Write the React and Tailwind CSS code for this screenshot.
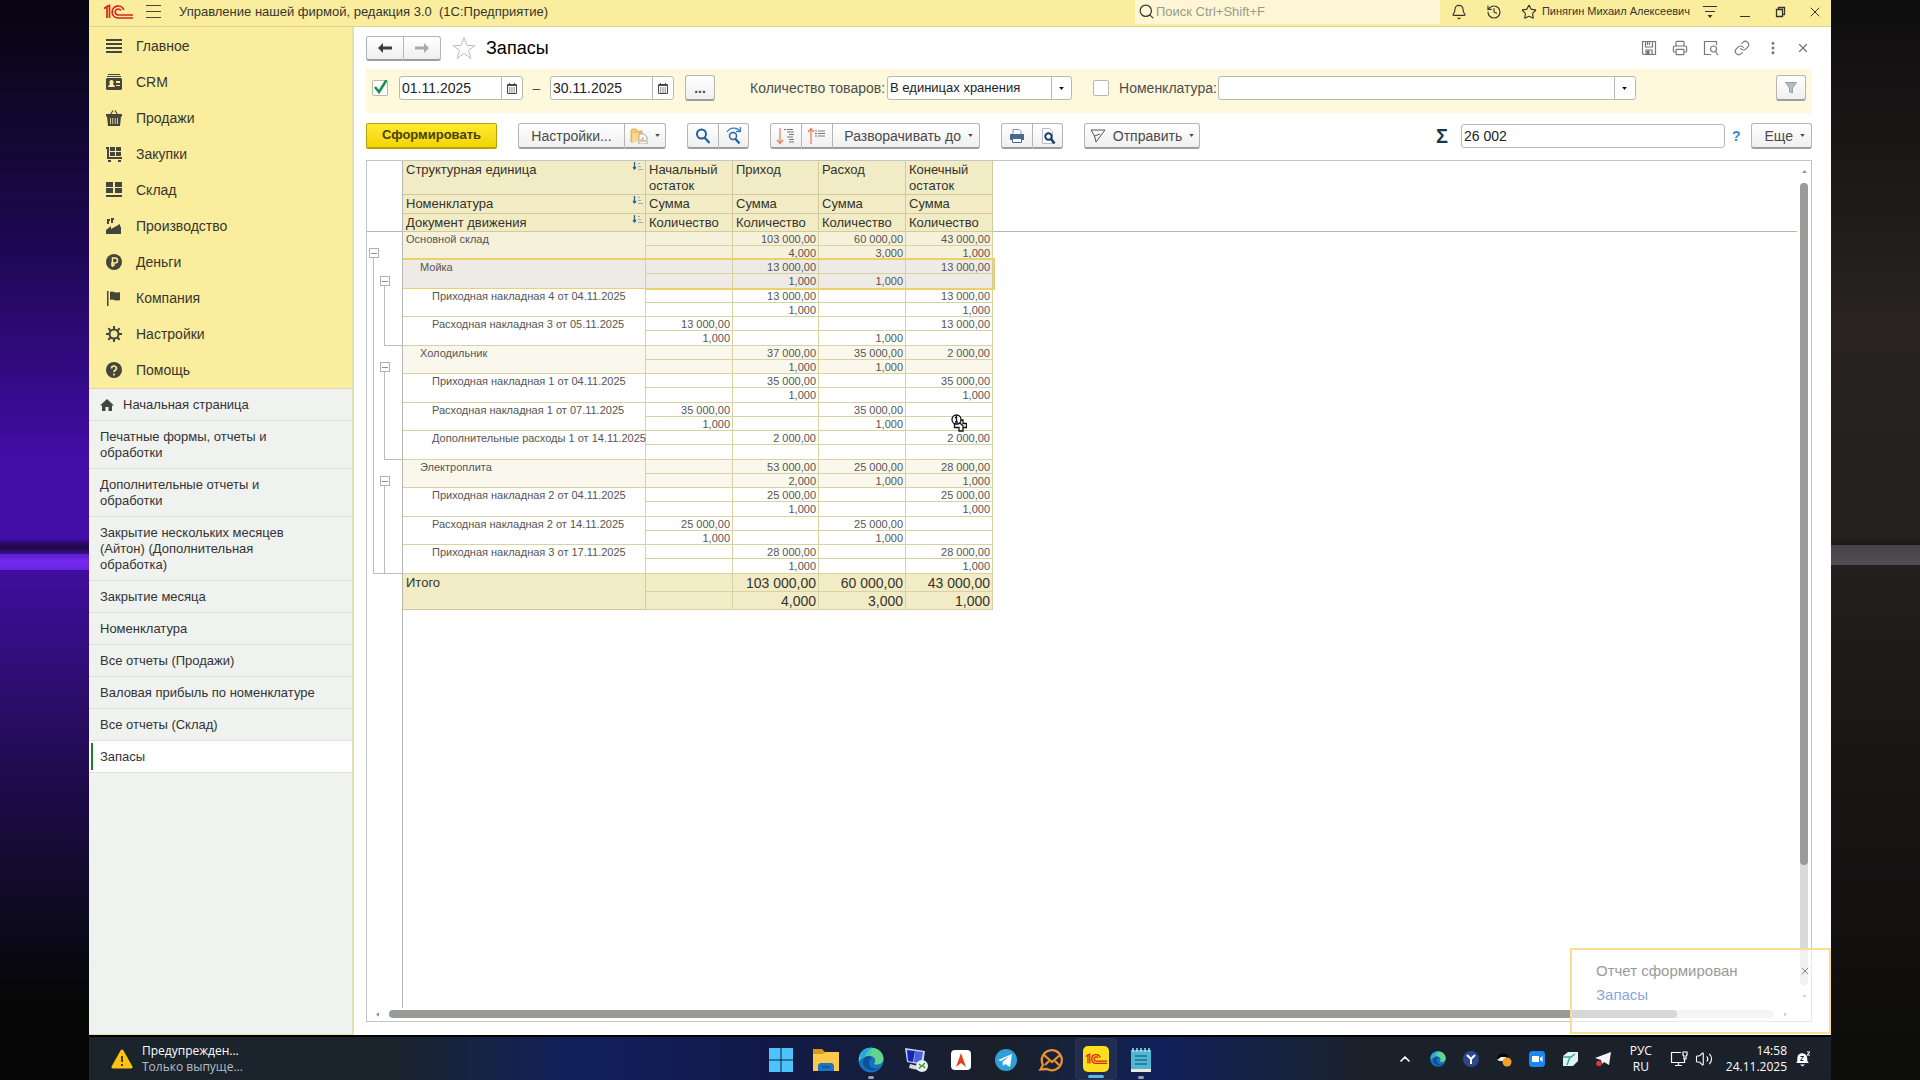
import React, { useState } from 'react';
import {
  Bell,
  History,
  Star,
  Search,
  Printer,
  Link,
  MoreVertical,
  X,
  ChevronUp,
  Volume2,
} from 'lucide-react';

const menuItems = [
  { name: 'Главное', icon: 'main' },
  { name: 'CRM', icon: 'crm' },
  { name: 'Продажи', icon: 'sales' },
  { name: 'Закупки', icon: 'purchases' },
  { name: 'Склад', icon: 'stock' },
  { name: 'Производство', icon: 'production' },
  { name: 'Деньги', icon: 'money' },
  { name: 'Компания', icon: 'company' },
  { name: 'Настройки', icon: 'settings' },
  { name: 'Помощь', icon: 'help' },
];

const openPages = [
  'Печатные формы, отчеты и обработки',
  'Дополнительные отчеты и обработки',
  'Закрытие нескольких месяцев (Айтон) (Дополнительная обработка)',
  'Закрытие месяца',
  'Номенклатура',
  'Все отчеты (Продажи)',
  'Валовая прибыль по номенклатуре',
  'Все отчеты (Склад)',
  'Запасы',
];

// sum / qty: opening balance, income, expense, closing balance
// span: how many table rows the group bracket covers
const rows = [
  { level: 0, name: 'Основной склад', sum: ['', '103 000,00', '60 000,00', '43 000,00'], qty: ['', '4,000', '3,000', '1,000'], span: 23 },
  { level: 1, name: 'Мойка', selected: true, sum: ['', '13 000,00', '', '13 000,00'], qty: ['', '1,000', '1,000', ''], span: 5 },
  { level: 2, name: 'Приходная накладная 4 от 04.11.2025', sum: ['', '13 000,00', '', '13 000,00'], qty: ['', '1,000', '', '1,000'] },
  { level: 2, name: 'Расходная накладная 3 от 05.11.2025', sum: ['13 000,00', '', '', '13 000,00'], qty: ['1,000', '', '1,000', ''] },
  { level: 1, name: 'Холодильник', sum: ['', '37 000,00', '35 000,00', '2 000,00'], qty: ['', '1,000', '1,000', ''], span: 7 },
  { level: 2, name: 'Приходная накладная 1 от 04.11.2025', sum: ['', '35 000,00', '', '35 000,00'], qty: ['', '1,000', '', '1,000'] },
  { level: 2, name: 'Расходная накладная 1 от 07.11.2025', sum: ['35 000,00', '', '35 000,00', ''], qty: ['1,000', '', '1,000', ''] },
  { level: 2, name: 'Дополнительные расходы 1 от 14.11.2025', sum: ['', '2 000,00', '', '2 000,00'], qty: ['', '', '', ''] },
  { level: 1, name: 'Электроплита', sum: ['', '53 000,00', '25 000,00', '28 000,00'], qty: ['', '2,000', '1,000', '1,000'], span: 7 },
  { level: 2, name: 'Приходная накладная 2 от 04.11.2025', sum: ['', '25 000,00', '', '25 000,00'], qty: ['', '1,000', '', '1,000'] },
  { level: 2, name: 'Расходная накладная 2 от 14.11.2025', sum: ['25 000,00', '', '25 000,00', ''], qty: ['1,000', '', '1,000', ''] },
  { level: 2, name: 'Приходная накладная 3 от 17.11.2025', sum: ['', '28 000,00', '', '28 000,00'], qty: ['', '1,000', '', '1,000'] },
];

const indents = ['pl-[3px]', 'pl-[17px]', 'pl-[29px]'];
const levelColors = ['bg-[#f6f1da]', 'bg-[#faf8ec]', 'bg-white'];

const MenuIcon = ({ type }) => {
  const icons = {
    main: <path d="M0 1h16v2H0zM0 5h16v2H0zM0 9h16v2H0zM0 13h16v2H0z" />,
    crm: (
      <>
        <path d="M2 0h12v1H2zM1 2h14v1H1z" />
        <path fillRule="evenodd" d="M1 4h14l1 1v10l-1 1H1l-1-1V5zM2 13h7c0-2-2-2-2-3 1-1 1-4-1.500-4S3 9 4 10c0 1-2 1-2 3zM10 7v2h4V7zM10 11v1h4v-1z" />
      </>
    ),
    sales: (
      <>
        <path d="M3.500 6L7 .500M12.500 6L9 .500" stroke="currentColor" strokeWidth="1.200" />
        <path fillRule="evenodd" d="M0 4h16v2.500h-1L14 16H2L1 6.500H0zM4 8v6h.8V8zM6.400 8v6h.8V8zM8.800 8v6h.8V8zM11.200 8v6h.8V8z" />
      </>
    ),
    purchases: (
      <path d="M0 1h3v10h13v2H1V3H0zM4 1h5v4H4zM10 1h5v4h-5zM4 6h5v4H4zM10 6h5v4h-5zM2 14h3v2H2zM12 14h3v2h-3z" />
    ),
    stock: <path d="M0 0h7v5H0zM9 0h7v5H9zM0 6h7v5H0zM9 6h7v5H9zM0 13h16v2H0z" />,
    production: <path d="M0 16v-4l5-4v3l9-5v3l1-1v8zM1 1h3v2H3v3H1zM5 0h3v2H7v3H5z" />,
    money: (
      <>
        <circle cx="8" cy="8" r="8" />
        <path d="M6.500 13V4h2.500a2.500 2.500 0 010 5H5M5 11h4" fill="none" stroke="#fbed9e" strokeWidth="1.500" />
      </>
    ),
    company: <path d="M1 1h1.500v15H1zM4 2c3-2 5 2 10 0v8c-5 2-7-2-10 0z" />,
    settings: (
      <g fill="none" stroke="currentColor">
        <circle cx="8" cy="8" r="4.500" strokeWidth="2" />
        <path d="M8 0v3M8 13v3M0 8h3M13 8h3M2.300 2.300l2 2M11.700 11.700l2 2M2.300 13.700l2-2M11.700 4.300l2-2" strokeWidth="2" />
      </g>
    ),
    help: (
      <>
        <circle cx="8" cy="8" r="8" />
        <path d="M5.500 6.500a2.500 2.500 0 115 0c0 1.500-2.500 1.500-2.500 3.500M8 11.500v2" fill="none" stroke="#fbed9e" strokeWidth="1.700" />
      </>
    ),
  };
  return (
    <svg viewBox="0 0 16 16" className="size-4 shrink-0 text-[#45453b]" fill="currentColor" aria-hidden="true">
      {icons[type]}
    </svg>
  );
};

const Logo = ({ className }) => (
  <svg viewBox="0 0 30 16" className={className} fill="none" stroke="currentColor" strokeWidth="1.700" aria-hidden="true">
    <path d="M1 4.500L4 2.500V14M6.500 14V1.500L4 2.500" />
    <path d="M20.800 6A6 6 0 1015 14h15" />
    <path d="M17.800 6.500A3 3 0 1015 11h15" />
  </svg>
);

const Caret = () => (
  <svg viewBox="0 0 6 4" className="h-[3px] w-[5px] shrink-0" fill="currentColor" aria-hidden="true">
    <path d="M0 0h6L3 4z" />
  </svg>
);

const TitleBar = () => (
  <header className="flex h-[27px] shrink-0 items-center border-b border-[#dfd48d] bg-[#fbed9e] pb-[3px] text-[#35352d]">
    <Logo className="ml-[14px] h-4 w-[30px] text-[#d9231c]" />
    <button type="button" aria-label="Меню" className="ml-[13px] flex w-[15px] flex-col gap-[5px]">
      <span className="h-px bg-[#45453b]" />
      <span className="h-px bg-[#45453b]" />
      <span className="h-px bg-[#45453b]" />
    </button>
    <h1 className="ml-[18px] whitespace-pre text-[13px]">Управление нашей фирмой, редакция 3.0  (1С:Предприятие)</h1>
    <label className="ml-auto flex h-6 w-[305px] items-center bg-[#fef6d5] pl-[3px]">
      <Search className="size-[17px] shrink-0" strokeWidth={1.7} />
      <input
        type="text"
        aria-label="Поиск"
        placeholder="Поиск Ctrl+Shift+F"
        className="ml-px w-full bg-transparent text-[13px] outline-none placeholder:text-[#9c9a88]"
      />
    </label>
    <div className="ml-[11px] flex items-center gap-[19px]">
      <button type="button" aria-label="Уведомления"><Bell className="size-4" strokeWidth={1.7} /></button>
      <button type="button" aria-label="История"><History className="size-4" strokeWidth={1.7} /></button>
      <button type="button" aria-label="Избранное"><Star className="size-4" strokeWidth={1.7} /></button>
    </div>
    <span className="ml-[5px] whitespace-nowrap text-[11px]">Пинягин Михаил Алексеевич</span>
    <div className="ml-[12px] mr-[8px] flex items-center gap-[19px]">
      <button type="button" aria-label="Сервис">
        <svg viewBox="0 0 16 14" className="h-3.5 w-4" fill="currentColor"><path d="M1 1h14v1H1zM3 6h10v1H3zM5.500 10h5L8 13z" /></svg>
      </button>
      <button type="button" aria-label="Свернуть">
        <svg viewBox="0 0 16 16" className="size-4"><path d="M3 12.500h10" stroke="currentColor" /></svg>
      </button>
      <button type="button" aria-label="Восстановить">
        <svg viewBox="0 0 16 16" className="size-4" fill="none" stroke="currentColor" strokeWidth="1.300"><path d="M4.500 5.500h6v7h-6zM6.500 5V3.500h6v7H11" /></svg>
      </button>
      <button type="button" aria-label="Закрыть"><X className="size-4" strokeWidth={1.5} /></button>
    </div>
  </header>
);

const Sidebar = () => (
  <nav className="flex w-[265px] shrink-0 flex-col border-r-2 border-b border-[#e6dfb0] bg-[#f0f2f0]">
    <ul className="border-b border-[#dcd6ac] bg-[#fbed9e] pt-px">
      {menuItems.map((item) => (
        <li key={item.name}>
          <a href="#" className="flex h-[36px] items-center gap-[14px] pl-[17px] text-sm text-[#35352d]">
            <MenuIcon type={item.icon} />
            {item.name}
          </a>
        </li>
      ))}
    </ul>
    <ul className="text-[13px]/[16px] text-[#333333]">
      <li className="border-b border-[#dde0dd]">
        <a href="#" className="flex items-center gap-[9px] py-[7px] pt-[8px] pl-[11px]">
          <svg viewBox="0 0 14 12" className="h-3 w-3.5" fill="#444" aria-hidden="true">
            <path d="M7 0l7 6.500h-2V12H8.500V8h-3v4H2V6.500H0z" />
          </svg>
          Начальная страница
        </a>
      </li>
      {openPages.map((page) => (
        <li key={page} className="border-b border-[#dde0dd]">
          {page === 'Запасы' ? (
            <a href="#" aria-current="page" className="flex bg-white py-[2px] pl-[2px]">
              <span className="w-[2px] bg-[#1b7f2c]" />
              <span className="py-[5px] pt-[6px] pl-[7px]">{page}</span>
            </a>
          ) : (
            <a href="#" className="block py-[7px] pt-[8px] pr-[33px] pl-[11px]">{page}</a>
          )}
        </li>
      ))}
    </ul>
  </nav>
);

const buttonLook = 'border border-[#b5b5b5] border-b-2 border-b-[#9d9d9d] bg-linear-to-b from-white to-[#efefef] text-[#4a4a4a]';

const FormHeader = () => {
  const [favorite, setFavorite] = useState(false);

  return (
    <div className="flex h-[42px] items-center pr-[2px] text-[#777777]">
      <div className="flex">
        <button type="button" aria-label="Назад" className={`flex h-[25px] w-[38px] items-center justify-center rounded-l-[3px] ${buttonLook}`}>
          <svg viewBox="0 0 14 10" className="h-2.5 w-3.5" fill="#3d3d3d"><path d="M0 5l5-5v3.500h9v3H5V10z" /></svg>
        </button>
        <button type="button" aria-label="Вперед" className={`flex h-[25px] w-[37px] items-center justify-center rounded-r-[3px] border-l-0 ${buttonLook}`}>
          <svg viewBox="0 0 14 10" className="h-2.5 w-3.5" fill="#a9a9a9"><path d="M14 5L9 0v3.500H0v3h9V10z" /></svg>
        </button>
      </div>
      <button type="button" aria-label="В избранное" className="ml-[11px]" onClick={() => setFavorite(!favorite)}>
        <svg viewBox="0 0 24 24" className="size-6" fill={favorite ? '#f6d743' : 'none'} stroke="#bcbcbc">
          <path d="M12 1.500l3 8h8l-6.500 5 2.500 8-7-5-7 5 2.500-8L1 9.500h8z" />
        </svg>
      </button>
      <h2 className="ml-[10px] text-lg text-black">Запасы</h2>
      <div className="ml-auto flex items-center gap-[15px]">
        <button type="button" aria-label="Сохранить">
          <svg viewBox="0 0 16 16" className="size-4" fill="none" stroke="currentColor" strokeWidth="1.200">
            <path d="M1.500 1.500h13v13h-12l-1-1zM4.500 2v5h7V2M6.500 2v3M8.500 2v3M5 14.500V10h6v4.500" /><path d="M6 11h2v3H6z" fill="currentColor" />
          </svg>
        </button>
        <button type="button" aria-label="Печать"><Printer className="size-4" strokeWidth={1.7} /></button>
        <button type="button" aria-label="Просмотр">
          <svg viewBox="0 0 16 16" className="size-4" fill="none" stroke="currentColor" strokeWidth="1.200">
            <path d="M8 14.500H1.500v-13h12V5" /><circle cx="10.500" cy="9" r="3" /><path d="M12.500 11.500l2.500 3.500" />
          </svg>
        </button>
        <button type="button" aria-label="Ссылка"><Link className="size-4" strokeWidth={1.7} /></button>
        <button type="button" aria-label="Еще"><MoreVertical className="size-4" strokeWidth={2.5} /></button>
        <button type="button" aria-label="Закрыть форму"><X className="size-3.5" strokeWidth={2} /></button>
      </div>
    </div>
  );
};

const DateField = ({ label, defaultValue }) => (
  <div className="flex h-[24px] w-[124px] rounded-[3px] border border-[#b9b9b0] bg-white">
    <input type="text" aria-label={label} defaultValue={defaultValue} className="min-w-0 flex-1 pl-[2px] text-sm text-[#222] outline-none" />
    <button type="button" aria-label={`${label}: календарь`} className="flex w-[21px] items-center justify-center border-l border-[#b9b9b0]">
      <svg viewBox="0 0 10 11" className="h-[11px] w-[10px]" fill="none" stroke="#4a4a4a">
        <path d="M.5 1.500h9v9h-9zM0 2.500h10M2.500 0v2M7.500 0v2" />
        <path d="M2 5h6M2 7h6M2 9h6" strokeDasharray="1.300 1" />
      </svg>
    </button>
  </div>
);

const Filters = () => {
  const [usePeriod, setUsePeriod] = useState(true);

  return (
    <div className="flex items-center bg-[#fef9dd] pt-[6px] pr-[6px] pb-[12px] pl-[6px] text-sm text-[#4d4d4d]">
      <label className="relative flex size-4">
        <input
          type="checkbox"
          aria-label="Использовать период"
          checked={usePeriod}
          onChange={(e) => setUsePeriod(e.target.checked)}
          className="size-4 appearance-none rounded-[2px] border border-[#b9b9b0] bg-white"
        />
        {usePeriod && (
          <svg viewBox="0 0 16 16" className="pointer-events-none absolute inset-0 size-4" fill="none" stroke="#12924a" strokeWidth="2.500">
            <path d="M3 7l4 5 7.500-12" />
          </svg>
        )}
      </label>
      <div className="ml-[11px] flex items-center">
        <DateField label="Начало периода" defaultValue="01.11.2025" />
        <span className="w-[27px] text-center">–</span>
        <DateField label="Конец периода" defaultValue="30.11.2025" />
      </div>
      <button type="button" aria-label="Выбрать период" className={`ml-[11px] h-[26px] w-[30px] rounded-[3px] font-bold ${buttonLook}`}>...</button>
      <label htmlFor="units" className="ml-[35px] whitespace-nowrap">Количество товаров:</label>
      <div className="relative ml-[2px] flex h-[24px] w-[185px] rounded-[3px] border border-[#b9b9b0] bg-white">
        <select id="units" className="w-full appearance-none pl-[2px] text-[13px] text-[#222] outline-none">
          <option>В единицах хранения</option>
        </select>
        <span className="pointer-events-none absolute inset-y-0 right-0 flex w-[20px] items-center justify-center border-l border-[#b9b9b0] text-black"><Caret /></span>
      </div>
      <input id="use-item" type="checkbox" className="ml-[21px] size-4 shrink-0 appearance-none rounded-[2px] border border-[#b9b9b0] bg-white checked:bg-[#12924a]" />
      <label htmlFor="use-item" className="ml-[10px] whitespace-nowrap">Номенклатура:</label>
      <div className="ml-px flex h-[24px] w-full max-w-[418px] min-w-0 rounded-[3px] border border-[#b9b9b0] bg-white">
        <input type="text" aria-label="Номенклатура" className="min-w-0 flex-1 pl-[2px] outline-none" />
        <button type="button" aria-label="Выбрать номенклатуру" className="flex w-[21px] items-center justify-center border-l border-[#b9b9b0] text-black"><Caret /></button>
      </div>
      <button type="button" aria-label="Отбор" className={`ml-auto flex h-[26px] w-[30px] shrink-0 items-center justify-center rounded-[3px] ${buttonLook}`}>
        <svg viewBox="0 0 12 12" className="size-3" fill="#b4bcc2" stroke="#98a2a9"><path d="M.5.500h11L7.500 6v5l-3-1V6z" /></svg>
      </button>
    </div>
  );
};

const TreeLines = ({ up }) => (
  <svg viewBox="0 0 20 18" className="h-[18px] w-5" fill="none">
    <path d={up ? 'M4 17V2M1 5l3-3.500L7 5' : 'M4 1v15M1 13l3 3.500L7 13'} stroke="#e8825a" strokeWidth="1.300" />
    <path
      d={up ? 'M8 4h2M8 6.500h2M8 9h2M11 4h7M11 6.500h7M11 9h7' : 'M8 2.500h2M11 2.500h6M11 5h7M13 7.500h5M11 10h6M13 12.500h5M13 15h5'}
      stroke="#777"
      strokeWidth="1.200"
    />
  </svg>
);

const Magnifier = ({ again }) => (
  <svg viewBox="0 0 18 18" className="size-[18px]" fill="none" stroke="#1f5f9e">
    {again && <path d="M2 5c3-5 10-5 13-1M15.500 0v4.500H11" stroke="#3d7fb5" strokeWidth="1.300" />}
    <circle cx={again ? 8 : 7.5} cy={again ? 9 : 7} r={again ? 3.5 : 4.5} strokeWidth={again ? 1.4 : 2} />
    <path d={again ? 'M10.500 12l4 4.500' : 'M10.500 10.500l5 5.500'} strokeWidth="2.200" />
  </svg>
);

const Toolbar = () => (
  <div className="mt-[10px] flex items-center text-sm">
    <button type="button" className="h-[26px] w-[131px] rounded-[2px] border border-b-2 border-[#b9a200] bg-linear-to-b from-[#ffea2e] to-[#f2d500] text-[13px] font-bold text-[#4a4000]">
      Сформировать
    </button>
    <div className="ml-[21px] flex">
      <button type="button" className={`h-[26px] w-[107px] rounded-l-[3px] ${buttonLook}`}>Настройки...</button>
      <button type="button" aria-label="Варианты отчета" className={`flex h-[26px] w-[41px] items-center justify-center gap-[7px] rounded-r-[3px] border-l-0 ${buttonLook}`}>
        <svg viewBox="0 0 18 16" className="h-4 w-[18px]">
          <path d="M1 3l1-2h4l1 2h5v2H4v9H1z" fill="#f3cb72" stroke="#d3a545" strokeWidth=".8" />
          <path d="M3 5h10v9H2z" fill="#f8d98f" />
          <path d="M9 6h5l3 3v7H9z" fill="#fff" stroke="#a6a6a6" />
          <path d="M11 14v-3M13 14v-5M15 14v-2" stroke="#cf7a52" />
        </svg>
        <Caret />
      </button>
    </div>
    <div className="ml-[21px] flex">
      <button type="button" aria-label="Найти" className={`flex h-[26px] w-[32px] items-center justify-center rounded-l-[3px] ${buttonLook}`}><Magnifier /></button>
      <button type="button" aria-label="Найти далее" className={`flex h-[26px] w-[30px] items-center justify-center rounded-r-[3px] border-l-0 ${buttonLook}`}><Magnifier again /></button>
    </div>
    <div className="ml-[21px] flex">
      <button type="button" aria-label="Развернуть группы" className={`flex h-[26px] w-[32px] items-center justify-center rounded-l-[3px] ${buttonLook}`}><TreeLines /></button>
      <button type="button" aria-label="Свернуть группы" className={`flex h-[26px] w-[31px] items-center justify-center border-l-0 ${buttonLook}`}><TreeLines up /></button>
      <button type="button" className={`flex h-[26px] w-[147px] items-center justify-end gap-[7px] rounded-r-[3px] border-l-0 pr-[6px] ${buttonLook}`}>Разворачивать до <Caret /></button>
    </div>
    <div className="ml-[21px] flex">
      <button type="button" aria-label="Печать отчета" className={`flex h-[26px] w-[32px] items-center justify-center rounded-l-[3px] ${buttonLook}`}>
        <svg viewBox="0 0 16 14" className="h-3.5 w-4"><path d="M4 6V.500h6l2 2V6" fill="#fff" stroke="#7d93a8" /><path d="M1 5h14v6H1z" fill="#46698c" /><path d="M3.500 9.500h9v4h-9z" fill="#fff" stroke="#46698c" /></svg>
      </button>
      <button type="button" aria-label="Предварительный просмотр" className={`flex h-[26px] w-[30px] items-center justify-center rounded-r-[3px] border-l-0 ${buttonLook}`}>
        <svg viewBox="0 0 16 16" className="size-4" fill="none"><path d="M2.500.500h7l3 3v12h-10z" fill="#fff" stroke="#b5bcc4" /><circle cx="8.500" cy="8.500" r="3.200" stroke="#123e70" strokeWidth="2" /><path d="M11 11l3.500 4.500" stroke="#123e70" strokeWidth="2.500" /></svg>
      </button>
    </div>
    <button type="button" className={`ml-[21px] flex h-[26px] w-[116px] items-center justify-center gap-[7px] rounded-[3px] ${buttonLook}`}>
      <svg viewBox="0 0 16 14" className="h-3.5 w-4" fill="none" stroke="#555"><path d="M1 1h14L6 13l-1.500-6zM4.500 7L10 5" /></svg>
      Отправить
      <Caret />
    </button>
    <label htmlFor="total" className="ml-auto text-xl/[26px] font-bold text-[#17364f]" aria-label="Сумма">Σ</label>
    <input id="total" type="text" readOnly value="26 002" className="ml-[13px] h-[24px] w-[264px] rounded-[3px] border border-[#b9b9b9] bg-white pl-[2px] text-sm text-[#222]" />
    <button type="button" aria-label="Справка" className="ml-[7px] w-[8px] font-bold text-[#2b8ac6]">?</button>
    <button type="button" className={`ml-[11px] flex h-[26px] w-[61px] items-center justify-end gap-[7px] rounded-[3px] pr-[6px] ${buttonLook}`}>Еще <Caret /></button>
  </div>
);

const SortIcon = () => (
  <svg viewBox="0 0 11 8" className="h-2 w-[11px] shrink-0" fill="none" aria-hidden="true">
    <path d="M2.500 0v7M1 5l1.500 2L4 5" stroke="#25678f" strokeWidth="1.300" />
    <path d="M6 1.500h2M6 4.500h3M6 7.500h5" stroke="#a3a99c" />
  </svg>
);

const Bracket = ({ className }) => (
  <>
    <span className={`absolute bottom-0 border-b border-l border-[#b9beb9] ${className}`} />
    <button type="button" aria-label="Свернуть группу" className="relative flex size-[10px] items-center justify-center border border-[#adb2ad] bg-white">
      <span className="h-px w-[6px] bg-[#8a8f8a]" />
    </button>
  </>
);

const headCell = 'border-r border-b border-[#d3ca97] bg-[#f2ecc6] pt-px pl-[3px] text-left align-top text-[13px] font-normal';
const numCell = 'border-r border-b border-[#d8d1a2] pt-px pr-[2px] text-right align-top';

const ReportTable = () => (
  <table className="w-full table-fixed border-separate border-spacing-0 text-[11px]/[12px] text-[#555555]">
    <colgroup>
      <col className="w-[12px]" />
      <col className="w-[24px]" />
      <col className="w-[243px]" />
      <col className="w-[87px]" />
      <col className="w-[86px]" />
      <col className="w-[87px]" />
      <col className="w-[87px]" />
      <col />
    </colgroup>
    <thead className="text-sm/[16px] text-[#33332b]">
      <tr className="h-[34px]">
        <td colSpan={2} rowSpan={3} className="border-r border-b border-[#b4b9b4]" />
        <th className={headCell}><div className="flex justify-between pr-[2px]">Структурная единица <SortIcon /></div></th>
        <th className={headCell}>Начальный остаток</th>
        <th className={headCell}>Приход</th>
        <th className={headCell}>Расход</th>
        <th className={headCell}>Конечный остаток</th>
        <td rowSpan={3} className="border-b border-[#b4b9b4]" />
      </tr>
      <tr className="h-[19px]">
        <th className={headCell}><div className="flex justify-between pr-[2px]">Номенклатура <SortIcon /></div></th>
        {[0, 1, 2, 3].map((i) => <th key={i} className={headCell}>Сумма</th>)}
      </tr>
      <tr className="h-[18px]">
        <th className={headCell}><div className="flex justify-between pr-[2px]">Документ движения <SortIcon /></div></th>
        {[0, 1, 2, 3].map((i) => <th key={i} className={headCell}>Количество</th>)}
      </tr>
    </thead>
    <tbody>
      {rows.map((row, index) => {
        const bg = row.selected ? 'bg-[#eeebe7]' : levelColors[row.level];
        return (
          <React.Fragment key={row.name}>
            <tr className="h-[14px]">
              {index === 0 && <td colSpan={2} className="border-r border-[#b4b9b4]" />}
              {row.level === 1 && <td className="border-r border-[#b4b9b4]" />}
              <td rowSpan={2} className={`relative border-r border-b border-[#d8d1a2] pt-px align-top whitespace-nowrap ${indents[row.level]} ${bg}`}>
                {row.name}
                {row.selected && (
                  <span className="pointer-events-none absolute -top-[2px] left-0 h-[32px] w-[592px] border-2 border-l-0 border-[#ecd06c]" />
                )}
              </td>
              {row.sum.map((value, i) => <td key={i} className={`${numCell} ${bg}`}>{value}</td>)}
            </tr>
            <tr className={index % 2 ? 'h-[15px]' : 'h-[14px]'}>
              {row.level === 0 && (
                <>
                  <td rowSpan={row.span} className="relative pt-[2px] pl-[2px] align-top"><Bracket className="top-[4px] -right-[23px] left-[6px]" /></td>
                  <td className="border-r border-[#b4b9b4]" />
                </>
              )}
              {row.level === 1 && (
                <td rowSpan={row.span} className="relative border-r border-[#b4b9b4] pt-[2px] pl-px align-top"><Bracket className="top-[4px] right-0 left-[5px]" /></td>
              )}
              {row.qty.map((value, i) => <td key={i} className={`${numCell} ${bg}`}>{value}</td>)}
            </tr>
          </React.Fragment>
        );
      })}
    </tbody>
    <tfoot className="text-sm/[16px] text-[#33332b]">
      <tr className="h-[18px]">
        <td colSpan={2} rowSpan={2} className="border-r border-[#b4b9b4]" />
        <th rowSpan={2} className={headCell}>Итого</th>
        {['', '103 000,00', '60 000,00', '43 000,00'].map((value, i) => (
          <td key={i} className={`${numCell} bg-[#f2ecc6]`}>{value}</td>
        ))}
      </tr>
      <tr className="h-[18px]">
        {['', '4,000', '3,000', '1,000'].map((value, i) => (
          <td key={i} className={`${numCell} bg-[#f2ecc6]`}>{value}</td>
        ))}
      </tr>
    </tfoot>
  </table>
);

const Report = () => (
  <section aria-label="Отчет" className="relative mt-[11px] mb-[13px] flex min-h-0 flex-1 flex-col border border-[#c3c7c3] bg-white">
    <div className="flex min-h-0 flex-1">
      <div className="flex min-w-0 flex-1 flex-col">
        <ReportTable />
        <div className="w-[36px] flex-1 border-r border-[#b4b9b4]" />
      </div>
      <div className="flex w-[14px] flex-col items-center pt-[9px] pb-[10px] text-[#8f938f]">
        <svg viewBox="0 0 6 4" className="h-[3px] w-[5px]" fill="currentColor"><path d="M3 0l3 4H0z" /></svg>
        <div className="my-[10px] w-[8px] flex-1 rounded-full bg-[#d9dbd9]">
          <div className="h-[85%] rounded-full bg-[#989b98]" />
        </div>
        <Caret />
      </div>
    </div>
    <div className="flex h-[13px] items-center pr-[24px] pb-px pl-[9px] text-[#8f938f]">
      <svg viewBox="0 0 4 6" className="h-[5px] w-[3px]" fill="currentColor"><path d="M4 0v6L0 3z" /></svg>
      <div className="mx-[10px] h-[8px] flex-1 rounded-full bg-[#e3e5e3]">
        <div className="h-full w-[93%] rounded-full bg-[#989b98]" />
      </div>
      <svg viewBox="0 0 4 6" className="h-[5px] w-[3px]" fill="currentColor"><path d="M0 0v6l4-3z" /></svg>
    </div>
    {/* mouse pointer */}
    <svg viewBox="0 0 16 18" className="pointer-events-none absolute top-[253px] left-[584px] h-[18px] w-4" fill="#fff" stroke="#111" strokeWidth="1.300">
      <path d="M8 6h4v3.500h3.500v4H12V17H8v-3.500H3.500v-4H8z" />
      <circle cx="5.500" cy="5.500" r="4.500" />
      <path d="M4 4l1.500-1.500v5.500M4 8h3M8.500 8.500l4 4" />
    </svg>
  </section>
);

const Toast = () => (
  <div role="status" className="absolute right-0 bottom-[1px] flex h-[86px] w-[261px] justify-between border-2 border-[#f8dd92] bg-white/60 pt-[9px] pr-[18px] pl-[24px]">
    <div className="flex flex-col text-[15px]/[24px]">
      <span className="text-[#9a9a9a]">Отчет сформирован</span>
      <a href="#" className="text-[#8aa7dc]">Запасы</a>
    </div>
    <button type="button" aria-label="Закрыть уведомление" className="mt-[6px] size-3 text-[#8a8a8a]"><X className="size-3" /></button>
  </div>
);

const Edge = ({ className }) => (
  <svg viewBox="0 0 26 26" className={className} aria-hidden="true">
    <circle cx="13" cy="13" r="12.500" fill="#1673c2" />
    <path d="M1 10C4-2 22-2 25 9c2 7-4 10-9 8 3-3 1-8-4-8C6 9 1 12 1 16z" fill="#45c9b0" />
    <path d="M14 1c7 0 12 6 11.500 12-1 4-5 5-9.500 4 3-3 1-8-4-8z" fill="#7adf6c" opacity=".55" />
    <path d="M1 10C3 3 9 0 14 1 8 3 10 8 5 10z" fill="#2ea3dd" />
    <path d="M12 9C6 9 3 14 6 19s10 6 15 2c-6 2-10-1-10-5 0-3 1-4 3-5z" fill="#0f4f9c" />
  </svg>
);

const taskbarIcons = [
  {
    name: 'Пуск',
    icon: <svg viewBox="0 0 26 26" className="size-[26px]" fill="#4cc3fa"><path d="M1 1h11.500v11.500H1zM13.500 1H25v11.500H13.500zM1 13.500h11.500V25H1zM13.500 13.500H25V25H13.500z" /></svg>,
  },
  {
    name: 'Проводник',
    icon: (
      <svg viewBox="0 0 26 26" className="size-[26px]">
        <path d="M0 2h9l3 3h13v6H0z" fill="#d99a1c" /><path d="M0 7h10l3-2h13v19H0z" fill="#fbc94c" />
        <path d="M5 24v-6l2-2h12l2 2v6z" fill="#1b74c5" /><path d="M9 20h8" stroke="#0e4f93" strokeWidth="1.500" />
      </svg>
    ),
  },
  { name: 'Edge', running: true, icon: <Edge className="size-[26px]" /> },
  {
    name: 'Удаленный рабочий стол',
    icon: (
      <svg viewBox="0 0 26 26" className="size-[26px]">
        <path d="M2 1l20 3-2 14L4 15z" fill="#c9d1ea" /><path d="M4 3l8 1-2 11-5-1z" fill="#1425b8" /><path d="M12 4l8 1-2 11-7-1z" fill="#4a62e0" />
        <path d="M7 17l8 2v4l-9-2z" fill="#d6d9e2" /><circle cx="19" cy="19" r="6" fill="#e6efe4" /><path d="M16 17l2.500 2-2.500 2.500M22 16l-2.500 2.500L22 21" stroke="#3f8c3f" fill="none" strokeWidth="1.300" />
      </svg>
    ),
  },
  {
    name: 'Ассистент',
    icon: <svg viewBox="0 0 26 26" className="size-[26px]"><rect x="3" y="3" width="20" height="20" rx="4" fill="#fff" /><path d="M13 6l5 14-5-4-5 4z" fill="#e2401d" /></svg>,
  },
  {
    name: 'Telegram',
    icon: <svg viewBox="0 0 26 26" className="size-[26px]"><circle cx="13" cy="13" r="11" fill="#2d9fd9" /><path d="M5 13l14-6-2 13-5-3-2 2-.5-4 7-6-8.500 5z" fill="#fff" /></svg>,
  },
  {
    name: 'eM Client',
    icon: <svg viewBox="0 0 26 26" className="size-[26px]" fill="none" stroke="#e8922f" strokeWidth="2.300"><path d="M2.500 22.500L5 18A10 10 0 119 22zM6 8l8 7 8-7M7 18l4-4M21 18l-4-4" /></svg>,
  },
  {
    name: '1С:Предприятие',
    active: true,
    icon: <span className="flex size-[26px] items-center justify-center rounded-[5px] bg-[#fddf1e]"><Logo className="h-[12px] w-[22px] text-[#d9231c]" /></span>,
  },
  {
    name: 'Блокнот',
    running: true,
    icon: (
      <svg viewBox="0 0 26 26" className="size-[26px]">
        <path d="M3 3h20v20H3z" fill="#4fb6d3" /><path d="M3 22h20v3H3z" fill="#ece7df" /><path d="M7 9h12M7 13h12M7 17h12" stroke="#1c6f94" strokeWidth="1.500" /><path d="M5 1v4M9 1v4M13 1v4M17 1v4M21 1v4" stroke="#a9e2f2" strokeWidth="1.500" />
      </svg>
    ),
  },
];

const Taskbar = () => (
  <footer className="flex h-[45px] shrink-0 items-center border-t-2 border-black bg-[#1a212b] font-['Open_Sans','Noto_Sans',sans-serif] text-xs/[16px] text-white">
    <div className="flex h-full flex-1 items-center gap-[9px] bg-linear-to-r from-[#1b232c] from-45% via-[#11205c] via-72% to-[#12194a] pl-[22px]">
      <svg viewBox="0 0 22 20" className="h-5 w-[22px]"><path d="M11 2l9 16H2z" fill="#fbc412" stroke="#fbc412" strokeWidth="3" strokeLinejoin="round" /><path d="M11 7v6M11 15v2" stroke="#3d3000" strokeWidth="1.800" /></svg>
      <div className="flex flex-col">
        <span>Предупрежден...</span>
        <span className="text-[#b9bec4]">Только выпуще...</span>
      </div>
    </div>
    <div className="flex h-full items-center gap-[3px] bg-linear-to-r from-[#12194a] via-[#1a2028] via-60% to-[#11205a]">
      {taskbarIcons.map((item) => (
        <button
          key={item.name}
          type="button"
          aria-label={item.name}
          className={`flex h-[42px] w-[42px] flex-col items-center justify-end rounded-[4px] ${item.active ? 'border border-[#2a3654] bg-white/5' : ''}`}
        >
          {item.icon}
          <span className={`mt-[3px] mb-[1px] h-[3px] rounded-full ${item.active ? 'w-[16px] bg-[#5bb8f0]' : item.running ? 'w-[6px] bg-[#9aa0ad]' : 'w-[6px]'}`} />
        </button>
      ))}
    </div>
    <div className="flex h-full flex-1 items-center justify-end bg-linear-to-r from-[#11205a] to-[#1a212b] to-30% pr-[20px]">
      <div className="flex items-center gap-[17px]">
        <button type="button" aria-label="Скрытые значки"><ChevronUp className="size-4" strokeWidth={2.5} /></button>
        <Edge className="size-4" />
        <svg viewBox="0 0 16 16" className="size-4"><circle cx="8" cy="8" r="8" fill="#2d4788" /><path d="M4 4l4 4 4-4M8 8v5" stroke="#fff" strokeWidth="2" fill="none" /></svg>
        <svg viewBox="0 0 16 16" className="size-4"><path d="M1 8c0-7 12-7 12 0z" fill="#050505" /><path d="M1 9l4-3h5v4H4z" fill="#eee" /><circle cx="11" cy="11" r="4.500" fill="#eea12c" /></svg>
        <svg viewBox="0 0 16 16" className="size-4"><rect width="16" height="16" rx="3.500" fill="#1789f5" /><path d="M3 5h7v6H3zM11 7l2.500-2v6L11 9z" fill="#fff" /></svg>
        <svg viewBox="0 0 16 16" className="size-4"><path d="M1 5l5-4h10v9l-5 5H1z" fill="#dff5f2" /><path d="M1 6h8l4-3M8 6l-3 8" stroke="#3aa6a2" strokeWidth="1.500" fill="none" /></svg>
        <svg viewBox="0 0 16 16" className="size-4"><path d="M0 7l16-6-2 13-5-3-2 2-1-4z" fill="#f5f5f5" /><circle cx="4" cy="12.500" r="2.800" fill="#d53a36" /></svg>
      </div>
      <div className="ml-[18px] w-[24px] text-center">РУС RU</div>
      <div className="ml-[17px] flex items-center gap-[7px]">
        <svg viewBox="0 0 18 16" className="h-4 w-[18px]" fill="none" stroke="#fff" strokeWidth="1.200"><path d="M11 1.500H1.500v10h13V8M5 14.500h7M8.500 12v2.500M13 1h4v3l-1 1v3h-2V5l-1-1z" /></svg>
        <Volume2 className="size-[18px]" strokeWidth={1.5} />
      </div>
      <div className="ml-[13px] flex flex-col items-end">
        <span>14:58</span>
        <span>24.11.2025</span>
      </div>
      <svg viewBox="0 0 16 16" className="ml-[8px] size-4"><path d="M1 12c2-1 1-3 1.500-6C3 1 11 1 12 6c.5 3 0 5 2 6zM5 13.500h5l-2.500 2z" fill="#fff" /><path d="M5.500 5.500h3l-3 4h3" stroke="#1a212b" fill="none" /><path d="M12 1h3l-3 3h3" stroke="#fff" fill="none" /></svg>
    </div>
  </footer>
);

const App = () => {
  return (
    <div className="flex h-screen bg-[#0c0b0c] font-['Liberation_Sans',Arial,sans-serif]">
      <div className="flex w-[89px] shrink-0 flex-col">
        <div className="h-[50%] bg-linear-to-b from-[#080410] via-[#1d0752] via-45% to-[#420ca6] to-85%" />
        <div className="h-[14px] bg-linear-to-b from-[#3a0b92] via-[#1c0742] to-[#3a1190]" />
        <div className="h-[16px] bg-linear-to-b from-[#5a1fcc] via-[#7429ee] to-[#6a26dd]" />
        <div className="flex-1 bg-linear-to-b from-[#3f0d9e] via-[#1c0a45] via-45% to-[#060606] to-85%" />
      </div>

      <div className="flex min-w-0 flex-1 flex-col">
        <TitleBar />
        <div className="relative flex min-h-0 flex-1 bg-white">
          <Sidebar />
          <main className="flex min-w-0 flex-1 flex-col pr-[19px] pl-[12px]">
            <FormHeader />
            <Filters />
            <Toolbar />
            <Report />
          </main>
          <Toast />
        </div>
        <Taskbar />
      </div>

      <div className="flex w-[89px] shrink-0 flex-col">
        <div className="h-[50%] bg-linear-to-b from-[#0e0d0d] via-[#292323] via-60% to-[#242020]" />
        <div className="h-[5px] bg-[#1d1a1a]" />
        <div className="h-[20px] bg-linear-to-b from-[#454247] to-[#514e54]" />
        <div className="flex-1 bg-linear-to-b from-[#231f1f] via-[#181515] via-40% to-[#0c0c0b]" />
      </div>
    </div>
  );
};

export default App;
